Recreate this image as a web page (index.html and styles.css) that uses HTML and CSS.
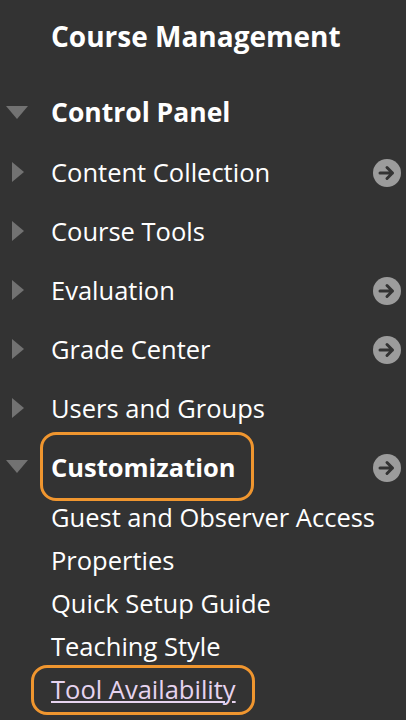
FILE: index.html
```html
<!DOCTYPE html>
<html lang="en">
<head>
<meta charset="utf-8">
<title>Course Management</title>
<link rel="stylesheet" href="styles.css">
</head>
<body>
<nav class="panel">
  <h1 class="title">Course Management</h1>
  <ul class="menu">
    <li class="row row-head open">
      <span class="tri tri-down"></span>
      <span class="label bold head-label">Control Panel</span>
    </li>
    <li class="row">
      <span class="tri tri-right"></span>
      <span class="label">Content Collection</span>
      <svg class="go" viewBox="0 0 28 28" aria-hidden="true"><circle cx="14" cy="14" r="14" fill="#9c9c9c"/><path d="M7 14h12.5M14 8.5l5.5 5.5-5.5 5.5" fill="none" stroke="#333" stroke-width="3" stroke-linecap="round" stroke-linejoin="round"/></svg>
    </li>
    <li class="row">
      <span class="tri tri-right"></span>
      <span class="label">Course Tools</span>
    </li>
    <li class="row">
      <span class="tri tri-right"></span>
      <span class="label">Evaluation</span>
      <svg class="go" viewBox="0 0 28 28" aria-hidden="true"><circle cx="14" cy="14" r="14" fill="#9c9c9c"/><path d="M7 14h12.5M14 8.5l5.5 5.5-5.5 5.5" fill="none" stroke="#333" stroke-width="3" stroke-linecap="round" stroke-linejoin="round"/></svg>
    </li>
    <li class="row">
      <span class="tri tri-right"></span>
      <span class="label">Grade Center</span>
      <svg class="go" viewBox="0 0 28 28" aria-hidden="true"><circle cx="14" cy="14" r="14" fill="#9c9c9c"/><path d="M7 14h12.5M14 8.5l5.5 5.5-5.5 5.5" fill="none" stroke="#333" stroke-width="3" stroke-linecap="round" stroke-linejoin="round"/></svg>
    </li>
    <li class="row">
      <span class="tri tri-right"></span>
      <span class="label">Users and Groups</span>
    </li>
    <li class="row">
      <span class="tri tri-down"></span>
      <span class="label bold ring ring-a">Customization</span>
      <svg class="go" viewBox="0 0 28 28" aria-hidden="true"><circle cx="14" cy="14" r="14" fill="#9c9c9c"/><path d="M7 14h12.5M14 8.5l5.5 5.5-5.5 5.5" fill="none" stroke="#333" stroke-width="3" stroke-linecap="round" stroke-linejoin="round"/></svg>
    </li>
  </ul>
  <ul class="sub">
    <li class="sub-row">Guest and Observer Access</li>
    <li class="sub-row">Properties</li>
    <li class="sub-row">Quick Setup Guide</li>
    <li class="sub-row">Teaching Style</li>
    <li class="sub-row"><a class="link ring ring-b" href="#">Tool Availability</a></li>
  </ul>
</nav>
</body>
</html>
```

FILE: styles.css
```css
* { box-sizing: border-box; }
html, body {
  margin: 0;
  padding: 0;
  background: #333333;
  height: 100%;
}
body {
  font-family: "Open Sans", "Liberation Sans", sans-serif;
  color: #ffffff;
  overflow: hidden;
}
.panel {
  width: 406px;
}
.title {
  margin: 0;
  padding: 16px 0 0 51px;
  height: 82px;
  font-size: 28px;
  line-height: 40px;
  font-weight: 700;
  white-space: nowrap;
}
.menu, .sub {
  list-style: none;
  margin: 0;
  padding: 0;
}
.row {
  display: flex;
  align-items: center;
  height: 59px;
  font-size: 25.5px;
  padding-right: 5px;
}
.row-head {
  height: 60px;
}
.head-label {
  font-size: 26.5px;
}
.tri {
  width: 51px;
  flex: 0 0 51px;
  display: flex;
  align-items: center;
  position: relative;
  height: 20px;
}
.tri-right::before {
  content: "";
  margin-left: 12px;
  width: 0;
  height: 0;
  border-top: 10px solid transparent;
  border-bottom: 10px solid transparent;
  border-left: 12px solid #727272;
}
.tri-down::before {
  content: "";
  margin-left: 6px;
  width: 0;
  height: 0;
  border-left: 11px solid transparent;
  border-right: 11px solid transparent;
  border-top: 13px solid #727272;
}
.label {
  flex: 1 1 auto;
  white-space: nowrap;
}
.bold {
  font-weight: 700;
}
.row .ring-a {
  flex: 0 0 auto;
  margin-right: auto;
}
.go {
  width: 28px;
  height: 28px;
  flex: 0 0 28px;
  margin-left: auto;
  margin-top: 3px;
}
.sub-row {
  height: 43px;
  line-height: 43px;
  padding-left: 51px;
  font-size: 25.5px;
  white-space: nowrap;
}
.link {
  color: #e6d3ef;
  text-decoration: underline;
  text-decoration-thickness: 1.5px;
  text-underline-offset: 2px;
}
.ring {
  position: relative;
  display: inline-block;
  line-height: 40px;
}
.ring::after {
  content: "";
  position: absolute;
  border: 3.5px solid #f0962f;
  border-radius: 16px;
  pointer-events: none;
}
.ring-a::after {
  left: -11px;
  right: -18px;
  top: -15px;
  bottom: -14px;
}
.ring-b::after {
  left: -20px;
  right: -19px;
  top: -4px;
  bottom: -6px;
}
```
